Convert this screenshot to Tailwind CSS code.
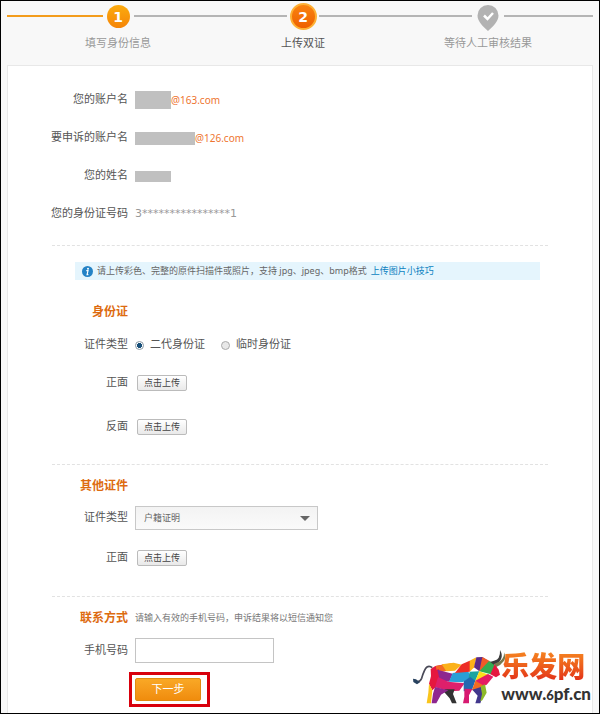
<!DOCTYPE html>
<html lang="zh-CN">
<head>
    <meta charset="UTF-8">
    <meta name="viewport" content="width=device-width, initial-scale=1.0">
    <title>上传双证</title>
    <script src="https://cdn.jsdelivr.net/npm/@tailwindcss/browser@4"></script>
</head>
<body class="bg-[#f8f8f8] font-['DejaVu_Sans','Noto_Sans_CJK_SC',sans-serif] text-[11px] leading-4 text-[#555]">
<div class="relative flex flex-col min-h-screen border border-black px-[6px]">
    <!-- steps -->
    <ol class="grid grid-cols-[111px_1fr_1fr_105px] h-16 text-[#999]">
        <li class="contents">
            <span class="col-start-1 row-start-1 mt-[14px] mr-[15px] h-[2px] bg-[#f39c1c]"></span>
            <span class="col-start-2 row-start-1 mt-[14px] ml-4 mr-4 h-[2px] bg-[#b5b5b5]"></span>
        </li>
        <li class="contents">
            <span class="col-start-3 row-start-1 mt-[14px] ml-4 mr-4 h-[2px] bg-[#b5b5b5]"></span>
            <span class="col-start-4 row-start-1 mt-[14px] ml-4 h-[2px] bg-[#b5b5b5]"></span>
        </li>
        <li class="col-start-2 row-start-1 justify-self-start -ml-12 w-24 pt-1 text-center">
            <span class="mx-auto flex size-[23px] items-center justify-center rounded-full bg-linear-to-b from-[#fbab0e] to-[#f58508] text-[14px] font-bold text-white">1</span>
            <span class="mt-2 block">填写身份信息</span>
        </li>
        <li class="col-start-3 row-start-1 justify-self-start -ml-12 w-24 pt-[2px] text-center text-[#555]">
            <span class="mx-auto flex size-[27px] items-center justify-center rounded-full border-2 border-[#fdb034] bg-linear-to-b from-[#f98310] to-[#ee6000] text-[14px] font-bold text-white">2</span>
            <span class="mt-[6px] block">上传双证</span>
        </li>
        <li class="col-start-4 row-start-1 justify-self-start -ml-12 w-24 pt-1 text-center">
            <svg class="mx-auto h-[26px] w-[22px]" viewBox="0 0 22 26"><path fill="#b2b2b2" d="M11 0a10.500 10.500 0 0 1 10.500 10.500c0 6-5.500 11-10.500 15.500C6 21.500.5 16.500.5 10.500A10.500 10.500 0 0 1 11 0z"/><path fill="none" stroke="#fff" stroke-width="2.500" d="M7 10.500l3.500 3.500 5.500-6"/></svg>
            <span class="mt-[5px] block">等待人工审核结果</span>
        </li>
    </ol>

    <form class="grow border border-b-0 border-[#e8e8e8] bg-white pt-[15px]">
        <dl class="grid grid-cols-[120px_1fr] auto-rows-[38px] items-center gap-x-[7px]">
            <dt class="text-right">您的账户名</dt>
            <dd class="flex items-center font-['Noto_Sans',sans-serif] text-[10px] text-[#ee7530]"><span class="h-[18px] w-[36px] bg-[#c0c0c0]"></span>@163.com</dd>
            <dt class="text-right">要申诉的账户名</dt>
            <dd class="flex items-center font-['Noto_Sans',sans-serif] text-[10px] text-[#ee7530]"><span class="h-[13px] w-[60px] bg-[#c0c0c0]"></span>@126.com</dd>
            <dt class="text-right">您的姓名</dt>
            <dd><span class="block h-[11px] w-[36px] bg-[#c0c0c0]"></span></dd>
            <dt class="text-right">您的身份证号码</dt>
            <dd class="text-[#999]">3****************1</dd>
        </dl>

        <section class="mx-11 mt-3 border-t border-dashed border-[#e2e2e2] pt-4">
            <p class="ml-[23px] mr-2 flex h-[18px] items-center bg-[#e5f5fd] pl-[7px] font-['Noto_Sans','Noto_Sans_CJK_SC',sans-serif] text-[9px] text-[#666]">
                <svg class="mr-1 size-[11px]" viewBox="0 0 11 11"><circle cx="5.500" cy="5.500" r="5.500" fill="#2482c5"/><circle cx="6" cy="2.700" r="1" fill="#fff"/><path d="M4.300 4.700h1.700L5.100 8.600h1.300" fill="none" stroke="#fff" stroke-width="1.200"/></svg>
                请上传彩色、完整的原件扫描件或照片，支持 jpg、jpeg、bmp格式
                <a href="#" class="ml-1 text-[#0b7fc0]">上传图片小技巧</a>
            </p>
            <h2 class="mt-6 w-[76px] text-right text-[12px] font-bold text-[#dd6b10]">身份证</h2>
            <fieldset class="mt-[17px] flex items-center">
                <legend class="float-left w-[76px] text-right">证件类型</legend>
                <label class="ml-[7px] flex items-center gap-[6px]"><input type="radio" name="card" checked class="size-[9px] appearance-none rounded-full border border-[#8b9aa5] bg-white bg-[radial-gradient(#174f79_45%,#fff_55%)]">二代身份证</label>
                <label class="ml-4 flex items-center gap-[6px]"><input type="radio" name="card" class="size-[9px] appearance-none rounded-full border border-[#aaa] bg-[#e8e8e8]">临时身份证</label>
            </fieldset>
            <div class="mt-[22px] flex h-4 items-center">
                <span class="w-[76px] text-right">正面</span>
                <button type="button" class="ml-[9px] h-4 w-[50px] rounded-[2px] border border-[#bbb] bg-linear-to-b from-white to-[#e9e9e9] text-[9px] leading-3 text-[#444]">点击上传</button>
            </div>
            <div class="mt-7 flex h-4 items-center">
                <span class="w-[76px] text-right">反面</span>
                <button type="button" class="ml-[9px] h-4 w-[50px] rounded-[2px] border border-[#bbb] bg-linear-to-b from-white to-[#e9e9e9] text-[9px] leading-3 text-[#444]">点击上传</button>
            </div>
        </section>

        <section class="mx-11 mt-[29px] border-t border-dashed border-[#e2e2e2] pt-[13px]">
            <h2 class="w-[76px] text-right text-[12px] font-bold text-[#dd6b10]">其他证件</h2>
            <div class="mt-3 flex items-center">
                <label for="other" class="w-[76px] text-right">证件类型</label>
                <div class="relative ml-[7px]">
                    <select id="other" class="block h-6 w-[183px] appearance-none border border-[#c8c8c8] bg-linear-to-b from-[#f3f3f3] to-[#fafafa] pl-2 text-[9px] text-[#666]"><option>户籍证明</option></select>
                    <svg class="pointer-events-none absolute right-2 top-[10px] h-[5px] w-[10px]" viewBox="0 0 10 5"><path fill="#666" d="M0 0h10L5 5z"/></svg>
                </div>
            </div>
            <div class="mt-5 flex h-4 items-center">
                <span class="w-[76px] text-right">正面</span>
                <button type="button" class="ml-[9px] h-4 w-[50px] rounded-[2px] border border-[#bbb] bg-linear-to-b from-white to-[#e9e9e9] text-[9px] leading-3 text-[#444]">点击上传</button>
            </div>
        </section>

        <section class="mx-11 mt-[30px] border-t border-dashed border-[#e2e2e2] pt-[13px]">
            <div class="flex items-center">
                <h2 class="w-[76px] text-right text-[12px] font-bold text-[#dd6b10]">联系方式</h2>
                <p class="ml-[7px] text-[9px] text-[#777]">请输入有效的手机号码，申诉结果将以短信通知您</p>
            </div>
            <div class="mt-3 flex items-center">
                <label for="phone" class="w-[76px] text-right">手机号码</label>
                <input id="phone" type="tel" class="ml-[7px] h-[25px] w-[139px] border border-[#c4c4c4] bg-white px-1">
            </div>
            <div class="ml-[77px] mt-[9px] w-fit border-[3px] border-[#d8000c] py-[3px] pl-[3px] pr-[6px]">
                <button class="block h-[23px] w-[66px] rounded-[2px] border border-[#e08a10] bg-linear-to-b from-[#f9a825] to-[#f08c0c] text-[11px] leading-4 text-white">下一步</button>
            </div>
        </section>
    </form>

    <!-- site logo -->
    <div class="absolute bottom-1 right-2 flex items-end">
        <svg class="mb-1 -mr-1 h-[58px] w-[93px]" viewBox="33 18 279 174">
            <path fill="none" stroke="#4a4a58" stroke-width="5" d="M42 121q13 6 20-9 8-28 16-34 7-5 16 2"/>
            <path fill="#28425f" d="M36 113l9 2 12 9-9 6-11-7z"/>
            <path fill="#3b3b3b" d="M260 62q26-1 33-12 5-8 4-23 9 16 3 28-8 16-34 20z"/>
            <path fill="#777a4e" d="M280 68q20-6 25-16 5-8 4-18 7 16-1 27-8 12-24 18z"/>
            <path fill="#e5173f" d="M89 84l14-9 28-5-22 25-18 36z"/>
            <path fill="#f36b21" d="M104 75l48-8-16 23-27 5z"/>
            <path fill="#fbb21a" d="M122 70l36-5 24 6-20 18-26 2z"/>
            <path fill="#e5173f" d="M84 128l9-34 20-10 6 20-8 28-17 16z"/>
            <path fill="#f9c51c" d="M84 128l10 20-4 39H77l5-32z"/>
            <path fill="#8e278f" d="M109 86l46 12-10 24-28-2z"/>
            <path fill="#2a9fd6" d="M155 96l45-7 12 20-28 15-40-2z"/>
            <path fill="#de1f6b" d="M111 108l30 14 50 5-16 22-28 2-45-12z"/>
            <path fill="#ed2d25" d="M182 70l24-11 10 12-10 21-44 4z"/>
            <path fill="#fbb21a" d="M206 59l20-10-6 30-14 13z"/>
            <path fill="#5b2a89" d="M226 49l18-1 13 9-22 34-16-12z"/>
            <path fill="#f05a28" d="M244 48l22 12-7 28-24 3z"/>
            <path fill="#33ad51" d="M264 60l18 14-12 26-35-9z"/>
            <path fill="#e5173f" d="M281 70l12 16 4 15-12 8-17-9z"/>
            <path fill="#19a4a0" d="M206 92l29-1-12 28-23 8z"/>
            <path fill="#fbdf1c" d="M235 91l28 10-10 16-30 2z"/>
            <path fill="#e51b63" d="M261 99l16 8-20 24-18 7-16-19z"/>
            <path fill="#2368b1" d="M188 121l20-13 15 11-10 28-25 4z"/>
            <path fill="#f36b21" d="M223 119l22 13-8 20-24-5z"/>
            <path fill="#333" d="M132 145l29 0-5 14 11 28h-14l-7-15-20-23z"/>
            <path fill="#8e278f" d="M102 138l40 10-22 13-14 26H92l4-29z"/>
            <path fill="#d71a71" d="M190 143l24 1-10 19 0 24h-18l4-20z"/>
            <path fill="#42378d" d="M214 146l26-8 7 22-9 27h-15l7-23z"/>
            <path fill="#8db928" d="M239 136l13-6 5 25-13 23-6 3 5-22z"/>
        </svg>
        <div>
            <div class="bg-linear-to-b from-[#f58220] to-[#e01b17] bg-clip-text text-[28px] font-black leading-8 text-transparent">乐发网</div>
            <div class="pb-1 font-['Lato',sans-serif] text-[17px] font-black leading-5 text-[#333]">www.<span class="text-[13px]">6</span>pf.cn</div>
        </div>
    </div>
</div>
</body>
</html>
